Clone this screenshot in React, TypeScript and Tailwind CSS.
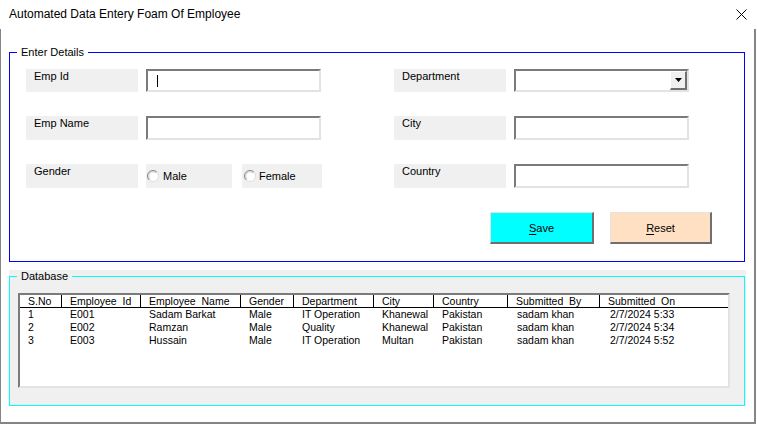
import React from "react";

const cols = "grid grid-cols-[42px_79px_100px_53px_80px_60px_74px_92px_1fr]";

const headers = [
  "S.No",
  "Employee  Id",
  "Employee  Name",
  "Gender",
  "Department",
  "City",
  "Country",
  "Submitted  By",
  "Submitted  On",
];

const rows = [
  ["1", "E001", "Sadam Barkat", "Male", "IT Operation", "Khanewal", "Pakistan", "sadam khan", "2/7/2024 5:33"],
  ["2", "E002", "Ramzan", "Male", "Quality", "Khanewal", "Pakistan", "sadam khan", "2/7/2024 5:34"],
  ["3", "E003", "Hussain", "Male", "IT Operation", "Multan", "Pakistan", "sadam khan", "2/7/2024 5:52"],
];

const sunken =
  "border-t-2 border-l-2 border-b-2 border-r-2 border-t-[#7a7a7a] border-l-[#7a7a7a] border-b-[#e3e3e3] border-r-[#e3e3e3] bg-white";

function Label({ text }: { text: string }) {
  return (
    <div className="w-[112px] h-full bg-[#f0f0f0] pl-[8px] pt-[1px] leading-[13px]">{text}</div>
  );
}

function TextBox({ caret }: { caret?: boolean }) {
  return (
    <div className={`ml-[8px] w-[175px] h-full flex items-center ${sunken}`}>
      {caret && <span className="ml-[9px] w-px h-[12px] bg-black" />}
    </div>
  );
}

function Radio({ label, w, gap }: { label: string; w: string; gap: string }) {
  return (
    <div className={`${w} h-full bg-[#f0f0f0] flex items-center pl-[1px] ${gap}`}>
      <svg width="12" height="12" viewBox="0 0 12 12">
        <circle cx="6" cy="6" r="5.5" fill="#fff" stroke="#dcdcdc" />
        <path d="M2.1 9.9 A5.5 5.5 0 0 1 9.9 2.1" fill="none" stroke="#8a8a8a" />
        <path d="M3 9 A4.2 4.2 0 0 1 9 3" fill="none" stroke="#c8c8c8" />
      </svg>
      <span className="leading-[13px] pt-[1px]">{label}</span>
    </div>
  );
}

export default function App() {
  return (
    <div className="w-[757px] h-[425px] bg-white text-black font-['Liberation_Sans',Arial,sans-serif] text-[11px]">
      {/* title bar */}
      <div className="h-[29px] flex items-center justify-between pl-[9px] pr-[10px]">
        <span className="text-[12px] leading-[15px]">Automated Data Entery Foam Of Employee</span>
        <svg width="11" height="11" viewBox="0 0 11 11" className="mb-[1px]">
          <path d="M0.5 0.5 L10.5 10.5 M10.5 0.5 L0.5 10.5" stroke="#000" strokeWidth="1" />
        </svg>
      </div>

      <div className="w-[756px] h-[395px] border-l border-r-2 border-b-2 border-[#858585] pt-[16px]">
        {/* Enter Details */}
        <fieldset className="ml-[8px] w-[736px] border border-[#0000ff] p-0 m-0 min-w-0">
          <legend className="ml-[7px] px-[4px] leading-[14px]">Enter Details</legend>
          <div className="pl-[16px] pt-[10px] pb-[17px] flex flex-col gap-[24px]">
            <div className="flex h-[23px]">
              <Label text="Emp Id" />
              <TextBox caret />
              <div className="ml-[73px] flex h-full">
                <Label text="Department" />
                <div className={`ml-[8px] w-[175px] h-full flex justify-end ${sunken} border-r-0 border-b-0`}>
                  <div className="w-[17px] h-full bg-[#f0f0f0] border-t border-l border-t-white border-l-white border-r-2 border-b-2 border-r-[#6f6f6f] border-b-[#6f6f6f] flex items-center justify-center">
                    <svg width="7" height="4" viewBox="0 0 7 4">
                      <polygon points="0,0 7,0 3.5,4" fill="#000" />
                    </svg>
                  </div>
                </div>
              </div>
            </div>

            <div className="flex h-[24px]">
              <Label text="Emp Name" />
              <TextBox />
              <div className="ml-[73px] flex h-full">
                <Label text="City" />
                <TextBox />
              </div>
            </div>

            <div className="flex h-[24px]">
              <Label text="Gender" />
              <div className="ml-[8px] flex h-full">
                <Radio label="Male" w="w-[86px]" gap="gap-[4px]" />
                <div className="ml-[10px] h-full">
                  <Radio label="Female" w="w-[80px] pl-[2px]" gap="gap-[3px]" />
                </div>
              </div>
              <div className="ml-[72px] flex h-full">
                <Label text="Country" />
                <TextBox />
              </div>
            </div>

            <div className="flex h-[32px]">
              <button className="ml-[464px] w-[104px] h-full bg-[#00ffff] border-t border-l border-t-[#e3e3e3] border-l-[#e3e3e3] border-r-2 border-b-2 border-r-[#6f6f6f] border-b-[#6f6f6f] text-[11px] pt-[1px]">
                <span className="underline underline-offset-[2px]">S</span>ave
              </button>
              <button className="ml-[16px] w-[102px] h-full bg-[#ffe0c2] border-t border-l border-t-[#e3e3e3] border-l-[#e3e3e3] border-r-2 border-b-2 border-r-[#6f6f6f] border-b-[#6f6f6f] text-[11px] pt-[1px]">
                <span className="underline underline-offset-[2px]">R</span>eset
              </button>
            </div>
          </div>
        </fieldset>

        {/* Database */}
        <div className="mt-[8px] ml-[8px] w-[737px] bg-[#f0f0f0]">
          <fieldset className="w-[736px] border border-[#00ffff] p-0 m-0 min-w-0">
            <legend className="ml-[7px] px-[4px] leading-[13px]">Database</legend>
            <div className="pl-[8px] pt-[10px] pb-[17px]">
              <div className="w-[712px] h-[95px] border-t-2 border-l-2 border-b-2 border-r-2 border-t-[#7a7a7a] border-l-[#7a7a7a] border-b-[#e3e3e3] border-r-[#e3e3e3] bg-white text-[10.5px]">
                <div className={`${cols} h-[13px] border-b border-black`}>
                  {headers.map((h, i) => (
                    <div
                      key={h}
                      className={`pl-[8px] leading-[12px] whitespace-pre ${i < headers.length - 1 ? "border-r border-black" : ""}`}
                    >
                      {h}
                    </div>
                  ))}
                </div>
                {rows.map((r) => (
                  <div key={r[0]} className={`${cols} h-[13px]`}>
                    {r.map((c, i) => (
                      <div
                        key={i}
                        className={`leading-[13px] whitespace-pre ${i === 7 ? "pl-[9px]" : i === 8 ? "pl-[10px]" : "pl-[8px]"}`}
                      >
                        {c}
                      </div>
                    ))}
                  </div>
                ))}
              </div>
            </div>
          </fieldset>
        </div>
      </div>
    </div>
  );
}
